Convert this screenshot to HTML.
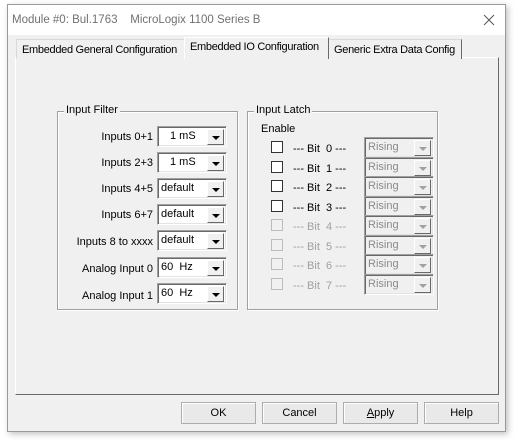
<!DOCTYPE html>
<html><head><style>
*{margin:0;padding:0;box-sizing:border-box}
body{width:514px;height:441px;background:#fff;font-family:"Liberation Sans",Tahoma,sans-serif;font-size:11px;color:#000;position:relative;overflow:hidden}
.a{position:absolute}
.win{left:7px;top:4px;width:499px;height:428px;background:#f0f0f0;border:1px solid #9a9a9a;box-shadow:2px 2px 6px rgba(0,0,0,.25)}
.title{left:0;top:0;width:497px;height:30px;background:#fff}
.tab{height:20px;border:1px solid #d9d9d9;border-bottom:none;background:#f0f0f0;padding:4px 0 0 5px;white-space:nowrap;letter-spacing:-0.3px}
.panel{left:7px;top:52px;width:484px;height:338px;border:1px solid #fff;border-right-color:#696969;border-bottom-color:#696969;background:#f0f0f0}
.grp{border:1px solid #a0a0a0;box-shadow:inset 1px 1px 0 #fff,1px 1px 0 #fff}
.gl{background:#f0f0f0;padding:0 2px;top:-8px;left:6px}
.lbl{width:100px;text-align:right}
.dd{width:70px;height:21px;background:#fff;border:1px solid;border-color:#a0a0a0 #fff #fff #a0a0a0;box-shadow:inset 1px 1px 0 #696969,inset -1px -1px 0 #e3e3e3}
.dd span{position:absolute;left:3px;top:3px}
.dd .b{position:absolute;right:2px;top:2px;width:17px;height:16px;background:#f0f0f0;border:1px solid;border-color:#fff #696969 #696969 #fff}
.dd .b:after{content:"";position:absolute;left:4px;top:6px;border:4px solid transparent;border-top:4px solid #000;border-bottom:0}
.dis{background:#f0f0f0;color:#8a8a8a}
.dis .b:after{border-top-color:#a0a0a0}
.cb{width:12px;height:12px;border:1px solid #333;background:#fff}
.cb.g{border-color:#bcbcbc;background:#f0f0f0}
.btn{width:75px;height:22px;border:1px solid #adadad;background:#e9e9e9;text-align:center;line-height:20px;box-shadow:inset 1px 1px 0 #fff}
</style></head><body>
<div class="a win">
 <div class="a title"></div>
 <div class="a" style="left:4px;top:9px;color:#707070;font-size:11.5px;white-space:nowrap">Module #0: Bul.1763&nbsp;&nbsp;&nbsp;&nbsp;MicroLogix 1100 Series B</div>
 <svg class="a" style="left:475px;top:9px" width="12" height="12"><path d="M1 1L11 11M11 1L1 11" stroke="#555" stroke-width="1"/></svg>
 <div class="a panel"></div>
 <div class="a tab" style="left:8px;top:34px;width:169px">Embedded General Configuration</div>
 <div class="a tab" style="left:320px;top:34px;width:134px;border-right-color:#696969">Generic Extra Data Config</div>
 <div class="a tab" style="left:176px;top:32px;width:145px;height:22px;border-color:#fff #696969 #f0f0f0 #fff;padding-top:3px">Embedded IO Configuration</div>

 <div class="a grp" style="left:49px;top:106px;width:181px;height:199px"><div class="a gl">Input Filter</div></div>
 <div class="a grp" style="left:239px;top:106px;width:191px;height:199px"><div class="a gl">Input Latch</div></div>

 <div class="a lbl" style="left:45px;top:126px">Inputs 0+1</div>
 <div class="a lbl" style="left:45px;top:152px">Inputs 2+3</div>
 <div class="a lbl" style="left:45px;top:178px">Inputs 4+5</div>
 <div class="a lbl" style="left:45px;top:204px">Inputs 6+7</div>
 <div class="a lbl" style="left:45px;top:231px">Inputs 8 to xxxx</div>
 <div class="a lbl" style="left:45px;top:258px">Analog Input 0</div>
 <div class="a lbl" style="left:45px;top:285px">Analog Input 1</div>
 <div class="a dd" style="left:149px;top:121px"><span style="left:12px">1 mS</span><div class="b"></div></div>
 <div class="a dd" style="left:149px;top:147px"><span style="left:12px">1 mS</span><div class="b"></div></div>
 <div class="a dd" style="left:149px;top:173px"><span>default</span><div class="b"></div></div>
 <div class="a dd" style="left:149px;top:199px"><span>default</span><div class="b"></div></div>
 <div class="a dd" style="left:149px;top:225px"><span>default</span><div class="b"></div></div>
 <div class="a dd" style="left:149px;top:252px"><span>60&nbsp; Hz</span><div class="b"></div></div>
 <div class="a dd" style="left:149px;top:278px"><span>60&nbsp; Hz</span><div class="b"></div></div>

 <div class="a" style="left:253px;top:118px">Enable</div>
 <div class="a cb" style="left:263px;top:136px"></div><div class="a" style="left:285px;top:138px">--- Bit&nbsp; 0 ---</div>
 <div class="a cb" style="left:263px;top:156px"></div><div class="a" style="left:285px;top:158px">--- Bit&nbsp; 1 ---</div>
 <div class="a cb" style="left:263px;top:175px"></div><div class="a" style="left:285px;top:177px">--- Bit&nbsp; 2 ---</div>
 <div class="a cb" style="left:263px;top:195px"></div><div class="a" style="left:285px;top:197px">--- Bit&nbsp; 3 ---</div>
 <div class="a cb g" style="left:263px;top:214px"></div><div class="a" style="left:285px;top:216px;color:#a0a0a0">--- Bit&nbsp; 4 ---</div>
 <div class="a cb g" style="left:263px;top:234px"></div><div class="a" style="left:285px;top:236px;color:#a0a0a0">--- Bit&nbsp; 5 ---</div>
 <div class="a cb g" style="left:263px;top:253px"></div><div class="a" style="left:285px;top:255px;color:#a0a0a0">--- Bit&nbsp; 6 ---</div>
 <div class="a cb g" style="left:263px;top:273px"></div><div class="a" style="left:285px;top:275px;color:#a0a0a0">--- Bit&nbsp; 7 ---</div>
 <div class="a dd dis" style="left:356px;top:132px"><span>Rising</span><div class="b"></div></div>
 <div class="a dd dis" style="left:356px;top:152px"><span>Rising</span><div class="b"></div></div>
 <div class="a dd dis" style="left:356px;top:171px"><span>Rising</span><div class="b"></div></div>
 <div class="a dd dis" style="left:356px;top:191px"><span>Rising</span><div class="b"></div></div>
 <div class="a dd dis" style="left:356px;top:210px"><span>Rising</span><div class="b"></div></div>
 <div class="a dd dis" style="left:356px;top:230px"><span>Rising</span><div class="b"></div></div>
 <div class="a dd dis" style="left:356px;top:249px"><span>Rising</span><div class="b"></div></div>
 <div class="a dd dis" style="left:356px;top:269px"><span>Rising</span><div class="b"></div></div>

 <div class="a btn" style="left:173px;top:397px">OK</div>
 <div class="a btn" style="left:254px;top:397px">Cancel</div>
 <div class="a btn" style="left:335px;top:397px"><u>A</u>pply</div>
 <div class="a btn" style="left:416px;top:397px">Help</div>
</div>
</body></html>
